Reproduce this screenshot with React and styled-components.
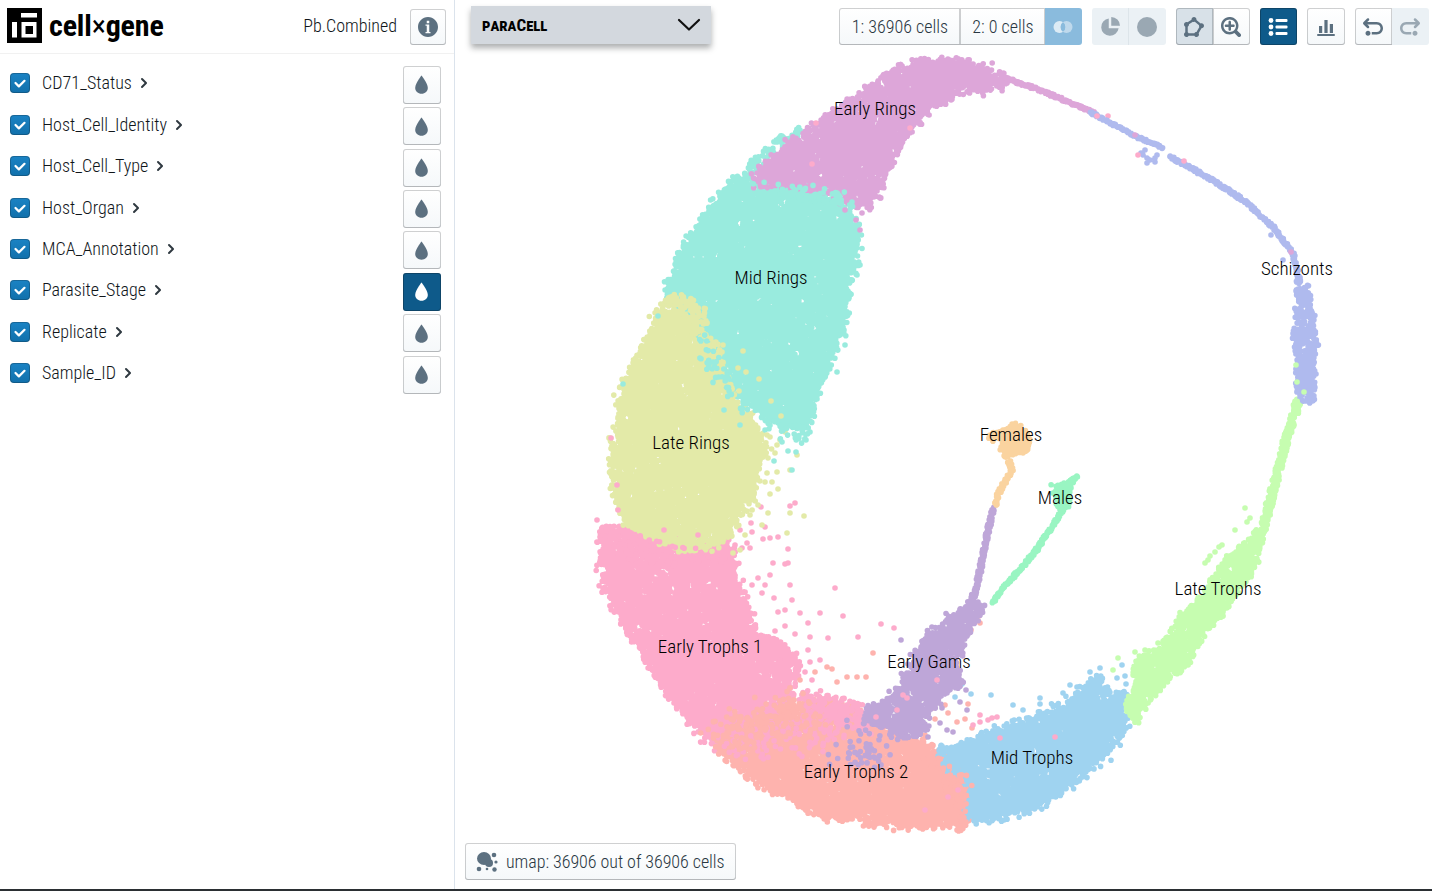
import React, { useMemo } from "react";
import styled, { createGlobalStyle } from "styled-components";

const FONT = `"Roboto Condensed", Roboto, "Liberation Sans", sans-serif`;

const GlobalStyle = createGlobalStyle`
  html, body { margin: 0; padding: 0; background: #fff; }
  body { font-family: ${FONT}; font-stretch: 75%; font-weight: 300; color: #10161a; }
`;

const Page = styled.div`
  width: 1432px;
  height: 891px;
  display: flex;
  border-bottom: 2px solid #2b2f33;
  box-sizing: border-box;
  overflow: hidden;
`;

const Sidebar = styled.aside`
  width: 455px;
  flex: none;
  box-sizing: border-box;
  border-right: 1px solid #dbe3ec;
  display: flex;
  flex-direction: column;
`;

const Header = styled.header`
  height: 54px;
  box-sizing: border-box;
  border-bottom: 1px solid #f1f1f1;
  padding: 8px 8px 0 7px;
  display: flex;
  align-items: flex-start;
`;

const Brand = styled.span`
  font-size: 30px;
  font-weight: 700;
  line-height: 35px;
  color: #000;
  margin-left: 7px;
  letter-spacing: -0.15px;
`;

const BrandCross = styled.span`
  font-weight: 400;
`;

const Dataset = styled.span`
  margin-left: auto;
  margin-right: 13px;
  font-size: 18px;
  line-height: 36px;
`;

const CategoryList = styled.ul`
  list-style: none;
  margin: 0;
  padding: 12.3px 13px 0 10px;
`;

const Category = styled.li`
  height: 41.43px;
  display: flex;
  align-items: flex-start;
`;

const Check = styled.span`
  width: 20px;
  height: 20px;
  margin-top: 7px;
  flex: none;
  border-radius: 4px;
  background: linear-gradient(#1b83c4, #1170ab);
  box-shadow: inset 0 0 0 1px rgba(16, 22, 26, 0.25);
  display: flex;
  align-items: center;
  justify-content: center;
`;

const CategoryName = styled.span`
  margin-left: 12px;
  font-size: 18px;
  line-height: 34px;
`;

const Chevron = styled.svg`
  margin: 9px 0 0 4px;
  fill: #2f3940;
`;

const Btn = styled.button`
  width: ${(p) => p.$w || 37}px;
  height: 37px;
  padding: 0 1px 0 0;
  flex: none;
  border: 0;
  border-radius: ${(p) => p.$radius || "3px"};
  display: flex;
  align-items: center;
  justify-content: center;
  font: inherit;
  font-size: 18px;
  color: #293742;
  background: ${(p) =>
    p.$primary
      ? "#0e5a8a"
      : p.$venn
      ? "#8abbdd"
      : p.$active
      ? "#d8e1e8"
      : p.$disabled
      ? "#ebf1f5"
      : "linear-gradient(#fff, #f5f8fa)"};
  box-shadow: ${(p) =>
    p.$primary
      ? "inset 0 0 0 1px rgba(16,22,26,.3)"
      : p.$disabled
      ? `inset ${p.$split ? "-1px 0 0 #dde5ea" : "0 0 0 transparent"}`
      : p.$venn
      ? "none"
      : "inset 0 0 0 1px rgba(16,22,26,.2), inset 0 -1px 0 rgba(16,22,26,.1)"};
`;

const CountBtn = styled(Btn)`
  padding: 0 0 0 1px;
`;

const InfoBtn = styled(Btn)`
  width: 36px;
  height: 36px;
  margin-top: 1px;
`;

const TintBtn = styled(Btn)`
  width: 38px;
  height: 38px;
  margin-left: auto;
  margin-top: -0.6px;
`;

const Main = styled.main`
  position: relative;
  flex: 1;
  min-width: 0;
`;

const Plot = styled.svg`
  position: absolute;
  inset: 0;
`;

const PlotLabel = styled.span`
  position: absolute;
  left: ${(p) => p.$x - 455}px;
  top: ${(p) => p.$y}px;
  transform: translate(-50%, -50%);
  font-size: 19px;
  line-height: 22px;
  white-space: nowrap;
  color: #000;
`;

const Toolbar = styled.div`
  position: absolute;
  left: 16px;
  right: 3px;
  top: 6px;
  display: flex;
  align-items: flex-start;
`;

const Dropdown = styled.div`
  width: 240px;
  height: 38px;
  box-sizing: border-box;
  padding: 0 10px 0 11px;
  background: #d3d8de;
  box-shadow: 0 4px 6px rgba(16, 22, 26, 0.35);
  display: flex;
  align-items: center;
  justify-content: space-between;
  font-size: 17px;
  font-weight: 700;
  font-variant: small-caps;
  color: #000;
`;

const ToolGroup = styled.div`
  display: flex;
  margin-top: 2px;
  margin-left: ${(p) => p.$gap ?? 10}px;
`;

const Footer = styled.div`
  position: absolute;
  left: 10px;
  top: 843px;
`;

const FooterBtn = styled(Btn)`
  width: 271px;
  justify-content: flex-start;
  padding-left: 11px;
  gap: 8px;
  letter-spacing: -0.05px;
`;

// ---- plot data -------------------------------------------------------------

function rng(seed) {
  return () => {
    seed |= 0;
    seed = (seed + 0x6d2b79f5) | 0;
    let t = Math.imul(seed ^ (seed >>> 15), 1 | seed);
    t = (t + Math.imul(t ^ (t >>> 7), 61 | t)) ^ t;
    return ((t ^ (t >>> 14)) >>> 0) / 4294967296;
  };
}

const inside = (poly, x, y) => {
  let hit = false;
  for (let i = 0, j = poly.length - 1; i < poly.length; j = i++) {
    const [xi, yi] = poly[i];
    const [xj, yj] = poly[j];
    if (yi > y !== yj > y && x < ((xj - xi) * (y - yi)) / (yj - yi) + xi) hit = !hit;
  }
  return hit;
};

const polyArea = (poly) =>
  Math.abs(
    poly.reduce((s, [x, y], i) => {
      const [nx, ny] = poly[(i + 1) % poly.length];
      return s + x * ny - nx * y;
    }, 0)
  ) / 2;

// scatter points in a polygon, the jitter gives the rough edge
function fill(rand, poly, density = 0.24, jitter = 5.5) {
  const xs = poly.map((p) => p[0]);
  const ys = poly.map((p) => p[1]);
  const [x0, x1, y0, y1] = [Math.min(...xs), Math.max(...xs), Math.min(...ys), Math.max(...ys)];
  const n = Math.round(polyArea(poly) * density);
  const out = [];
  while (out.length < n) {
    const x = x0 + rand() * (x1 - x0);
    const y = y0 + rand() * (y1 - y0);
    if (inside(poly, x, y)) {
      const g = (rand() + rand() + rand() - 1.5) * jitter;
      const h = (rand() + rand() + rand() - 1.5) * jitter;
      out.push([x + g, y + h]);
    }
  }
  return out;
}

// points along a polyline, for the thin trajectories
function chain(rand, line, width = 1.5, step = 0.7) {
  const out = [];
  for (let i = 0; i < line.length - 1; i++) {
    const [ax, ay] = line[i];
    const [bx, by] = line[i + 1];
    const len = Math.hypot(bx - ax, by - ay);
    const n = Math.ceil(len / step);
    for (let k = 0; k < n; k++) {
      const t = k / n;
      out.push([ax + (bx - ax) * t + (rand() - 0.5) * width, ay + (by - ay) * t + (rand() - 0.5) * width]);
    }
  }
  return out;
}

const C = {
  early: "#dda6d9",
  mid: "#99ebde",
  late: "#e3eaa8",
  et1: "#fdabcb",
  et2: "#feb3ae",
  mt: "#9fd3f0",
  lt: "#c6fdb0",
  gam: "#bea6d8",
  fem: "#fad39f",
  male: "#99f5c2",
  sch: "#afbaee",
};

function buildLayers() {
  const r = rng(71);
  const layers = [];
  const add = (color, pts) => layers.push({ color, pts });

  // early trophozoites 1
  add(
    C.et1,
    fill(r, [
      [600, 525], [623, 527], [690, 540], [733, 545], [735, 580], [755, 620], [760, 637], [778, 642],
      [798, 662], [792, 683], [792, 704], [770, 725], [722, 735], [718, 752], [703, 735], [680, 708],
      [657, 678], [633, 638], [612, 605], [603, 580], [600, 550],
    ])
  );
  add(C.et1, [
    [790, 585], [835, 588], [800, 613], [820, 613], [843, 616], [808, 623], [785, 626], [775, 631],
    [795, 634], [810, 637], [828, 638], [858, 637], [881, 624], [894, 628], [820, 660], [810, 662],
    [752, 585], [765, 585], [762, 593], [758, 578], [770, 575], [795, 503], [790, 506], [761, 507],
    [751, 523], [740, 530], [752, 532], [765, 527], [770, 538], [778, 537], [763, 539], [747, 543],
    [788, 549], [773, 563], [788, 563], [785, 564], [742, 548], [750, 548], [808, 650], [805, 672], [812, 680],
    [785, 610], [792, 600], [780, 660], [774, 598], [778, 612], [597, 520],
  ]);

  // early trophozoites 2
  add(
    C.et2,
    fill(r, [
      [716, 746], [732, 730], [770, 718], [790, 708], [817, 702], [857, 708], [890, 733], [917, 740],
      [945, 755], [965, 777], [975, 800], [965, 825], [923, 827], [873, 824], [823, 817], [790, 800],
      [757, 781], [724, 757],
    ])
  );
  add(C.et1, fill(r, [[715, 735], [860, 700], [880, 730], [800, 750], [735, 760]], 0.035, 8));
  add(C.et1, fill(r, [[795, 690], [860, 700], [870, 725], [810, 720]], 0.08, 5));
  add(C.et2, fill(r, [[705, 725], [790, 690], [830, 725], [730, 750]], 0.035, 8));
  add(C.et2, [
    [873, 653], [857, 677], [866, 677], [827, 667], [832, 669], [837, 682], [815, 672], [847, 677], [800, 680],
    [979, 616], [980, 623], [971, 630], [933, 708], [948, 713], [968, 704], [935, 719], [957, 722], [965, 719], [972, 728],
    [945, 705], [925, 735],
  ]);

  // late rings
  add(
    C.late,
    fill(r, [
      [663, 303], [693, 307], [700, 337], [727, 373], [733, 400], [750, 413], [766, 450], [757, 477],
      [752, 500], [735, 525], [720, 545], [690, 550], [657, 540], [626, 525], [620, 505], [611, 477],
      [613, 443], [620, 400], [630, 370], [646, 340],
    ])
  );
  add(C.late, [
    [767, 473], [777, 472], [790, 470], [765, 482], [772, 482], [778, 489], [770, 494], [790, 513],
    [804, 516], [768, 513], [787, 533], [762, 525], [797, 455], [775, 453], [768, 458], [780, 440],
    [770, 437], [785, 432], [777, 445], [758, 505], [750, 515], [745, 535], [740, 550], [733, 553],
  ]);
  add(C.et1, fill(r, [[600, 530], [735, 555], [700, 565], [620, 560]], 0.03, 5));
  add(C.et1, [[611, 438], [617, 485], [618, 510], [625, 545], [664, 530], [698, 535], [735, 545]]);

  // mid rings
  add(
    C.mid,
    fill(r, [
      [737, 176], [750, 180], [803, 186], [843, 205], [857, 227], [855, 257], [850, 283], [848, 313],
      [835, 350], [825, 377], [815, 400], [806, 432], [783, 425], [762, 415], [737, 397], [727, 367],
      [703, 337], [695, 310], [672, 300], [666, 290], [670, 277], [683, 250], [703, 220], [722, 190],
    ])
  );
  add(C.mid, fill(r, [[745, 180], [750, 160], [770, 143], [800, 125], [803, 132], [775, 150], [758, 170]], 0.1, 2.5));
  add(C.mid, fill(r, [[760, 420], [805, 425], [808, 442], [780, 437]], 0.05, 4));
  add(C.mid, [
    [788, 451], [796, 452], [774, 461], [792, 470], [658, 316], [623, 384], [843, 327], [840, 335],
    [806, 440], [810, 432], [782, 442], [765, 430], [857, 275], [860, 265], [845, 345], [837, 372],
    [724, 410], [740, 425],
  ]);
  add(C.late, fill(r, [[664, 292], [700, 300], [725, 370], [735, 395], [715, 370], [680, 310]], 0.1, 5));
  add(C.late, [[743, 351], [759, 379], [771, 401], [739, 391], [714, 343], [722, 352], [723, 345], [738, 368], [781, 416], [746, 372], [767, 435]]);
  add(C.mid, fill(r, [[695, 330], [725, 365], [735, 400], [750, 418], [725, 400], [705, 360]], 0.04, 5));

  // early rings
  add(
    C.early,
    fill(r, [
      [752, 184], [763, 165], [790, 142], [815, 127], [835, 110], [870, 88], [895, 68], [930, 60], [965, 60],
      [998, 72], [1006, 80], [998, 88], [960, 93], [930, 108], [903, 140], [886, 175], [878, 195],
      [865, 210], [850, 202], [825, 190], [790, 186],
    ])
  );
  add(C.mid, fill(r, [[750, 185], [840, 190], [860, 210], [800, 200]], 0.05, 4));
  add(C.early, chain(r, [[1005, 78], [1040, 90], [1080, 107], [1095, 113]], 2.5, 0.8));
  add(C.early, [[862, 213], [856, 220], [860, 230], [870, 208], [880, 198], [845, 210]]);
  add(C.et1, [[816, 123], [910, 128], [1108, 116], [812, 164]]);

  // mid trophozoites
  add(
    C.mt,
    fill(r, [
      [940, 748], [960, 745], [1000, 728], [1033, 718], [1067, 703], [1090, 680], [1100, 675], [1107, 693],
      [1127, 693], [1130, 717], [1124, 733], [1104, 757], [1070, 787], [1030, 810], [1000, 817], [973, 822],
      [962, 810], [973, 787], [948, 767],
    ])
  );
  add(C.mt, [
    [1013, 705], [1040, 698], [1040, 704], [1023, 710], [991, 695], [971, 694], [1063, 693], [1070, 685],
    [1077, 687], [1100, 668], [1090, 672], [1122, 665], [1117, 678], [1125, 676], [1126, 684],
    [955, 697], [950, 686], [962, 684],
  ]);
  add(C.et2, fill(r, [[925, 745], [975, 785], [965, 825], [940, 790]], 0.03, 6));
  add(C.et1, [[925, 810], [948, 797], [1000, 738], [1055, 737], [958, 790]]);

  // late trophozoites
  add(C.lt, chain(r, [[1298, 402], [1286, 440], [1273, 490], [1263, 530]], 6.5, 0.5));
  add(
    C.lt,
    fill(r, [
      [1263, 530], [1257, 565], [1230, 605], [1203, 635],
      [1187, 665], [1167, 681], [1140, 711], [1138, 725], [1132, 721], [1126, 700], [1135, 690], [1135, 662],
      [1160, 645], [1183, 615], [1200, 597], [1225, 559], [1243, 547], [1255, 530],
    ], 0.25, 3)
  );
  add(C.lt, [
    [1205, 563], [1208, 560], [1210, 556], [1215, 552], [1219, 547], [1222, 545], [1235, 530], [1245, 508],
    [1247, 522], [1250, 518], [1118, 658], [1113, 670], [1135, 652], [1145, 650], [1158, 643],
  ]);

  // gametocytes
  add(C.gam, chain(r, [[993, 508], [985, 545], [977, 585], [968, 612]], 3.5, 0.6));
  add(
    C.gam,
    fill(r, [
      [968, 602], [976, 602], [990, 604], [975, 620], [962, 650], [957, 665], [962, 680], [958, 688],
      [945, 693], [930, 713], [925, 733], [900, 738], [882, 728], [865, 722], [868, 707], [885, 702],
      [897, 690], [907, 670], [922, 642], [927, 632], [955, 612],
    ], 0.2, 4)
  );
  add(C.gam, fill(r, [[850, 720], [900, 735], [880, 770], [820, 760]], 0.02, 6));
  add(C.gam, [[960, 702], [967, 710], [942, 708], [923, 722], [940, 723], [947, 730], [953, 732], [901, 640], [928, 737], [966, 690]]);
  add(C.et1, [[903, 695], [907, 698], [937, 680], [876, 717], [897, 710], [980, 715], [980, 722], [988, 720], [997, 717], [973, 725], [992, 718]]);

  // gametes
  add(C.fem, fill(r, [[987, 437], [1017, 423], [1030, 437], [1028, 453], [1013, 453], [1007, 460], [997, 443]], 0.25, 2));
  add(C.fem, chain(r, [[1009, 461], [1012, 470], [1006, 480], [998, 494], [995, 505]], 3, 0.7));
  add(C.male, fill(r, [[1077, 476], [1065, 483], [1050, 485], [1055, 495], [1058, 510], [1068, 508], [1072, 485]], 0.25, 1.6));
  add(C.male, chain(r, [[1078, 476], [1068, 482]], 2, 0.7));
  add(C.male, chain(r, [[1063, 510], [1050, 530], [1035, 552], [1018, 572], [1005, 585], [992, 603]], 2.5, 0.6));

  // schizonts
  add(C.sch, chain(r, [[1090, 112], [1133, 135], [1163, 148]], 2, 0.7));
  add(C.sch, chain(r, [[1170, 157], [1213, 180], [1247, 203], [1273, 227], [1293, 253], [1300, 283]], 2.5, 0.6));
  add(C.sch, fill(r, [[1296, 278], [1310, 285], [1315, 320], [1318, 350], [1315, 400], [1305, 405], [1296, 395], [1295, 360], [1293, 340], [1295, 310]], 0.17, 1.5));
  add(C.sch, [[1145, 150], [1143, 155], [1147, 158], [1141, 153], [1147, 163], [1155, 162], [1157, 155], [1150, 160], [1155, 158], [1271, 235], [1283, 260]]);
  add(C.et1, [[1097, 116], [1184, 161], [1138, 155]]);
  add(C.early, [[1135, 135], [1291, 252]]);
  add(C.lt, fill(r, [[1292, 402], [1300, 400], [1299, 410], [1294, 417]], 0.3, 1));
  add(C.lt, [[1297, 382], [1296, 365], [1304, 392]]);

  return layers.map((l) => ({
    color: l.color,
    d: l.pts.map(([x, y]) => `M${x.toFixed(1)} ${y.toFixed(1)}h.01`).join(""),
  }));
}

const LABELS = [
  ["Early Rings", 875, 109],
  ["Mid Rings", 771, 278],
  ["Late Rings", 691, 443],
  ["Schizonts", 1297, 269],
  ["Females", 1011, 435],
  ["Males", 1060, 498],
  ["Late Trophs", 1218, 589],
  ["Early Trophs 1", 710, 647],
  ["Early Gams", 929, 662],
  ["Early Trophs 2", 856, 772],
  ["Mid Trophs", 1032, 758],
];

const CATEGORIES = [
  "CD71_Status",
  "Host_Cell_Identity",
  "Host_Cell_Type",
  "Host_Organ",
  "MCA_Annotation",
  "Parasite_Stage",
  "Replicate",
  "Sample_ID",
];

// ---- icons -----------------------------------------------------------------

const ICON = "#5c7080";

const Icon = ({ d, size = 20, color = ICON }) => (
  <svg width={size} height={size} viewBox="0 0 16 16" fill={color}>
    <path fillRule="evenodd" d={d} />
  </svg>
);

const TINT = "M8 1.2S3.2 7.3 3.2 10.6C3.2 13.1 5.3 15 8 15s4.8-1.9 4.8-4.4C12.8 7.3 8 1.2 8 1.2z";
const INFO = "M8 0C3.58 0 0 3.58 0 8s3.58 8 8 8 8-3.58 8-8-3.58-8-8-8zM7 3h2v2H7V3zm3 10H6v-1h1V7H6V6h3v6h1v1z";
const POLY =
  "M14 5c-.24 0-.47.05-.68.13L9.97 2.34c.01-.11.03-.22.03-.34 0-1.1-.9-2-2-2S6 .9 6 2c0 .04.01.08.01.12L2.88 4.21C2.61 4.08 2.32 4 2 4 .9 4 0 4.9 0 6c0 .74.4 1.38 1 1.72v4.55c-.6.35-1 .99-1 1.73 0 1.1.9 2 2 2 .74 0 1.38-.4 1.72-1h4.55c.35.6.98 1 1.72 1 1.1 0 2-.9 2-2 0-.37-.11-.7-.28-1L14 9c1.11-.01 2-.9 2-2s-.9-2-2-2zm-4.01 7c-.73 0-1.37.41-1.71 1H3.73c-.18-.3-.43-.55-.73-.72V7.72c.6-.34 1-.98 1-1.72 0-.04-.01-.08-.01-.12l3.13-2.09c.27.13.56.21.88.21.24 0 .47-.05.68-.13l3.35 2.79c-.01.11-.03.22-.03.34 0 .37.11.7.28 1l-2.29 4z";
const ZOOM =
  "M7.99 5.99v-2c0-.55-.45-1-1-1s-1 .45-1 1v2h-2c-.55 0-1 .45-1 1s.45 1 1 1h2v2c0 .55.45 1 1 1s1-.45 1-1v-2h2c.55 0 1-.45 1-1s-.45-1-1-1h-2zm7.56 7.44l-2.67-2.68a6.94 6.94 0 001.11-3.76c0-3.87-3.13-7-7-7s-7 3.13-7 7 3.13 7 7 7c1.39 0 2.68-.42 3.76-1.11l2.68 2.67a1.498 1.498 0 102.12-2.12zm-8.56-1.44c-2.76 0-5-2.24-5-5s2.24-5 5-5 5 2.24 5 5-2.24 5-5 5z";
const UNDO =
  "M4 11c-1.1 0-2 .9-2 2s.9 2 2 2 2-.9 2-2-.9-2-2-2zm7-7H3.41L4.7 2.71c.19-.18.3-.43.3-.71a1.003 1.003 0 00-1.71-.71l-3 3C.11 4.47 0 4.72 0 5c0 .28.11.53.29.71l3 3a1.003 1.003 0 001.42-1.42L3.41 6H11c1.66 0 3 1.34 3 3s-1.34 3-3 3H7v2h4c2.76 0 5-2.24 5-5s-2.24-5-5-5z";
const REDO =
  "M12 11c-1.1 0-2 .9-2 2s.9 2 2 2 2-.9 2-2-.9-2-2-2zm3.71-6.71l-3-3a1.003 1.003 0 00-1.42 1.42L12.59 4H5C2.24 4 0 6.24 0 9s2.24 5 5 5h4v-2H5c-1.66 0-3-1.34-3-3s1.34-3 3-3h7.59L11.3 7.29c-.19.18-.3.43-.3.71a1.003 1.003 0 001.71.71l3-3c.18-.18.29-.43.29-.71 0-.28-.11-.53-.29-.71z";
const PIE = "M7 1.1A7 7 0 1 0 14.9 9H7V1.1zM9 0v7h7a7 7 0 0 0-7-7z";
const CIRCLE = "M8 0a8 8 0 1 0 0 16A8 8 0 0 0 8 0z";
const CHEVRON =
  "M10.71 7.29l-4-4a1.003 1.003 0 00-1.42 1.42L8.59 8 5.3 11.29c-.19.18-.3.43-.3.71a1.003 1.003 0 001.71.71l4-4c.18-.18.29-.43.29-.71 0-.28-.11-.53-.29-.71z";
const TICK =
  "M12 5c-.28 0-.53.11-.71.29L7 9.59l-2.29-2.3a1.003 1.003 0 00-1.42 1.42l3 3c.18.18.43.29.71.29s.53-.11.71-.29l5-5A1.003 1.003 0 0012 5z";

const Logo = () => (
  <svg width="35" height="35" viewBox="0 0 35 35">
    <rect width="35" height="35" fill="#000" />
    <rect x="14" y="5" width="16" height="4.5" fill="#fff" />
    <rect x="5" y="14" width="5" height="15.5" fill="#fff" />
    <path fillRule="evenodd" fill="#fff" d="M14.5 14h15v15.5h-15zM18.5 18v8H26v-8z" />
  </svg>
);

const Venn = () => (
  <svg width="20" height="20" viewBox="0 0 20 20" fill="#fff">
    <circle cx="6.5" cy="10" r="6" opacity=".7" />
    <circle cx="13.5" cy="10" r="6" opacity=".45" />
    <path d="M10 5.1a6 6 0 0 1 0 9.8 6 6 0 0 1 0-9.8z" fill="#8abbdd" />
  </svg>
);

const ListIcon = () => (
  <svg width="20" height="20" viewBox="0 0 20 20" fill="#fff">
    <circle cx="3" cy="3.5" r="2.4" />
    <circle cx="3" cy="10" r="2.4" />
    <circle cx="3" cy="16.5" r="2.4" />
    <rect x="7.5" y="2" width="12" height="3" rx="1" />
    <rect x="7.5" y="8.5" width="12" height="3" rx="1" />
    <rect x="7.5" y="15" width="12" height="3" rx="1" />
  </svg>
);

const BarsIcon = () => (
  <svg width="20" height="20" viewBox="0 0 20 20" fill={ICON}>
    <rect x="3" y="9" width="3.2" height="7" />
    <rect x="8.4" y="3" width="3.2" height="13" />
    <rect x="13.8" y="7" width="3.2" height="9" />
    <rect x="1" y="17" width="18" height="2" rx="1" />
  </svg>
);

const ScatterIcon = () => (
  <svg width="22" height="22" viewBox="0 0 22 22" fill={ICON}>
    <ellipse cx="8" cy="7.5" rx="7" ry="6.5" />
    <circle cx="13" cy="12" r="4" />
    <circle cx="18" cy="4" r="2.3" />
    <circle cx="20" cy="11" r="1.6" />
    <circle cx="3" cy="18" r="2.3" />
    <circle cx="18.5" cy="18.5" r="2.2" />
    <circle cx="11" cy="18" r="1.3" />
  </svg>
);

export default function App() {
  const layers = useMemo(buildLayers, []);
  return (
    <Page>
      <GlobalStyle />
      <Sidebar>
        <Header>
          <Logo />
          <Brand>
            cell<BrandCross>×</BrandCross>gene
          </Brand>
          <Dataset>Pb.Combined</Dataset>
          <InfoBtn>
            <Icon d={INFO} />
          </InfoBtn>
        </Header>
        <CategoryList>
          {CATEGORIES.map((name, i) => (
            <Category key={name}>
              <Check>
                <Icon d={TICK} size={18} color="#fff" />
              </Check>
              <CategoryName>{name}</CategoryName>
              <Chevron width="16" height="16" viewBox="0 0 16 16">
                <path d={CHEVRON} />
              </Chevron>
              <TintBtn $primary={i === 5}>
                <Icon d={TINT} size={21} color={i === 5 ? "#fff" : ICON} />
              </TintBtn>
            </Category>
          ))}
        </CategoryList>
      </Sidebar>

      <Main>
        <Plot width="977" height="889" viewBox="455 0 977 889">
          {layers.map((l, i) => (
            <path key={i} d={l.d} fill="none" stroke={l.color} strokeWidth="5.6" strokeLinecap="round" />
          ))}
        </Plot>
        {LABELS.map(([text, x, y]) => (
          <PlotLabel key={text} $x={x} $y={y}>
            {text}
          </PlotLabel>
        ))}

        <Toolbar>
          <Dropdown>
            <span>paraCell</span>
            <svg width="24" height="16" viewBox="0 0 24 16" fill="none" stroke="#111" strokeWidth="2.2" strokeLinecap="round" strokeLinejoin="round">
              <path d="M2 3l10 9.5L22 3" />
            </svg>
          </Dropdown>
          <ToolGroup $gap={128}>
            <CountBtn $w={121} $radius="3px 0 0 3px">1: 36906 cells</CountBtn>
            <CountBtn $w={85} $radius="0">2: 0 cells</CountBtn>
            <Btn $venn $radius="0 3px 3px 0">
              <Venn />
            </Btn>
          </ToolGroup>
          <ToolGroup>
            <Btn $disabled $split $radius="3px 0 0 3px">
              <Icon d={PIE} color="#9aa8b3" />
            </Btn>
            <Btn $disabled $radius="0 3px 3px 0">
              <Icon d={CIRCLE} color="#9aa8b3" />
            </Btn>
          </ToolGroup>
          <ToolGroup>
            <Btn $active $radius="3px 0 0 3px">
              <Icon d={POLY} />
            </Btn>
            <Btn $radius="0 3px 3px 0">
              <Icon d={ZOOM} />
            </Btn>
          </ToolGroup>
          <ToolGroup>
            <Btn $primary>
              <ListIcon />
            </Btn>
          </ToolGroup>
          <ToolGroup>
            <Btn $w={38}>
              <BarsIcon />
            </Btn>
          </ToolGroup>
          <ToolGroup>
            <Btn $radius="3px 0 0 3px">
              <Icon d={UNDO} />
            </Btn>
            <Btn $disabled $radius="0 3px 3px 0">
              <Icon d={REDO} color="#9aa8b3" />
            </Btn>
          </ToolGroup>
        </Toolbar>

        <Footer>
          <FooterBtn>
            <ScatterIcon />
            umap: 36906 out of 36906 cells
          </FooterBtn>
        </Footer>
      </Main>
    </Page>
  );
}
